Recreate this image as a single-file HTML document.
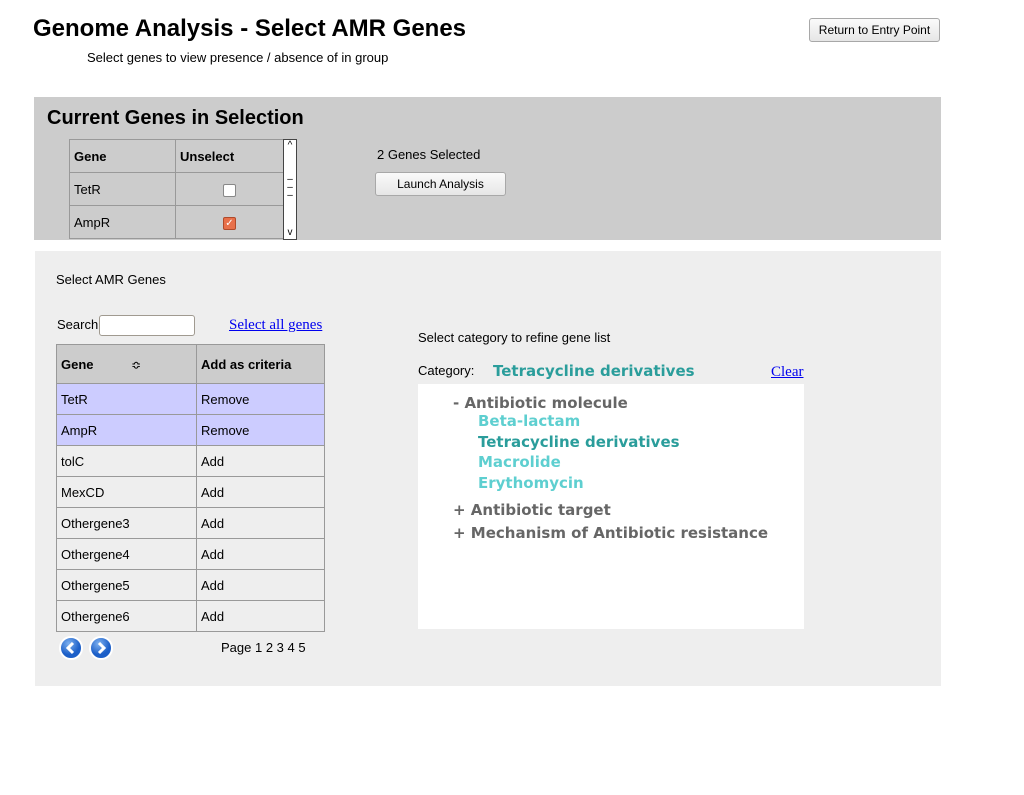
<!DOCTYPE html>
<html><head><style>
body{margin:0;width:1024px;height:795px;background:#fff;font-family:"Liberation Sans",sans-serif;position:relative;overflow:hidden}
.a{position:absolute}
h1{position:absolute;left:33px;top:15px;margin:0;font-size:24px;font-weight:bold}
.btn{position:absolute;background:linear-gradient(#fafafa,#e6e6e6);border:1px solid #a8a8a8;border-radius:3px;font-size:12px;text-align:center;box-sizing:border-box}
table{border-collapse:collapse;position:absolute;font-size:13px}
td{border:1px solid #999;padding:0 4px;box-sizing:border-box}
.tree{font-family:"DejaVu Sans",sans-serif;font-weight:bold;font-size:15px;position:absolute}
</style></head><body>
<h1>Genome Analysis - Select AMR Genes</h1>
<div class="a" style="left:87px;top:50px;font-size:13px">Select genes to view presence / absence of in group</div>
<div class="btn" style="left:809px;top:18px;width:131px;height:24px;line-height:22px">Return to Entry Point</div>

<div class="a" style="left:34px;top:97px;width:907px;height:143px;background:#ccc"></div>
<div class="a" style="left:47px;top:107px;font-size:20px;font-weight:bold">Current Genes in Selection</div>
<table style="left:69px;top:139px;width:215px">
<tr style="height:33px;font-weight:bold"><td style="width:106px">Gene</td><td>Unselect</td></tr>
<tr style="height:33px"><td>TetR</td><td style="text-align:center"><span style="display:inline-block;width:11px;height:11px;background:#fff;border:1px solid #888;border-radius:2px;vertical-align:middle"></span></td></tr>
<tr style="height:33px"><td>AmpR</td><td style="text-align:center"><span style="display:inline-block;width:11px;height:11px;background:#e8704a;border:1px solid #b04a2a;border-radius:2px;vertical-align:middle;color:#fff;font-size:10px;line-height:11px">✓</span></td></tr>
</table>
<div class="a" style="left:283px;top:139px;width:12px;height:99px;border:1px solid #444;background:#fff;font-size:10px;text-align:center;line-height:12px">^<div style="margin-top:24px;line-height:8px">–<br>–<br>–</div><div style="position:absolute;bottom:0;width:12px">v</div></div>
<div class="a" style="left:377px;top:147px;font-size:13px">2 Genes Selected</div>
<div class="btn" style="left:375px;top:172px;width:131px;height:24px;line-height:22px">Launch Analysis</div>

<div class="a" style="left:35px;top:251px;width:906px;height:435px;background:#eee"></div>
<div class="a" style="left:56px;top:272px;font-size:13px">Select AMR Genes</div>
<div class="a" style="left:57px;top:317px;font-size:13px">Search</div>
<div class="a" style="left:99px;top:315px;width:94px;height:19px;border:1px solid #a09a90;border-radius:3px;background:#fff"></div>
<div class="a" style="left:229px;top:317px;font-family:'Liberation Serif',serif;font-size:15px;color:#00e;text-decoration:underline">Select all genes</div>
<table style="left:56px;top:344px;width:269px">
<tr style="height:39px;font-weight:bold;background:#ccc"><td style="width:140px">Gene <span style="margin-left:34px;font-weight:normal;font-size:12px">≎</span></td><td>Add as criteria</td></tr>
<tr style="height:31px;background:#ccf"><td>TetR</td><td>Remove</td></tr>
<tr style="height:31px;background:#ccf"><td>AmpR</td><td>Remove</td></tr>
<tr style="height:31px"><td>tolC</td><td>Add</td></tr>
<tr style="height:31px"><td>MexCD</td><td>Add</td></tr>
<tr style="height:31px"><td>Othergene3</td><td>Add</td></tr>
<tr style="height:31px"><td>Othergene4</td><td>Add</td></tr>
<tr style="height:31px"><td>Othergene5</td><td>Add</td></tr>
<tr style="height:31px"><td>Othergene6</td><td>Add</td></tr>
</table>
<svg class="a" style="left:59px;top:636px" width="56" height="26"><defs><radialGradient id="g" cx="40%" cy="30%"><stop offset="0" stop-color="#7fb2f0"/><stop offset="1" stop-color="#1c5fc8"/></radialGradient></defs>
<circle cx="12" cy="12" r="11" fill="url(#g)" stroke="#fff" stroke-width="2"/><path d="M14 7l-5 5 5 5" stroke="#fff" stroke-width="3" fill="none"/>
<circle cx="42" cy="12" r="11" fill="url(#g)" stroke="#fff" stroke-width="2"/><path d="M40 7l5 5-5 5" stroke="#fff" stroke-width="3" fill="none"/></svg>
<div class="a" style="left:221px;top:640px;font-size:13px">Page 1 2 3 4 5</div>

<div class="a" style="left:418px;top:330px;font-size:13px">Select category to refine gene list</div>
<div class="a" style="left:418px;top:363px;font-size:13px">Category:</div>
<div class="tree" style="left:493px;top:362px;color:#2a9d9b">Tetracycline derivatives</div>
<div class="a" style="left:771px;top:364px;font-family:'Liberation Serif',serif;font-size:15px;color:#00e;text-decoration:underline">Clear</div>
<div class="a" style="left:418px;top:384px;width:386px;height:245px;background:#fff"></div>
<div class="tree" style="left:453px;top:394px;color:#666">- Antibiotic molecule</div>
<div class="tree" style="left:478px;top:412px;color:#5ecfd0">Beta-lactam</div>
<div class="tree" style="left:478px;top:433px;color:#2a9d9b">Tetracycline derivatives</div>
<div class="tree" style="left:478px;top:453px;color:#5ecfd0">Macrolide</div>
<div class="tree" style="left:478px;top:474px;color:#5ecfd0">Erythomycin</div>
<div class="tree" style="left:453px;top:501px;color:#666">+ Antibiotic target</div>
<div class="tree" style="left:453px;top:524px;color:#666">+ Mechanism of Antibiotic resistance</div>
</body></html>
